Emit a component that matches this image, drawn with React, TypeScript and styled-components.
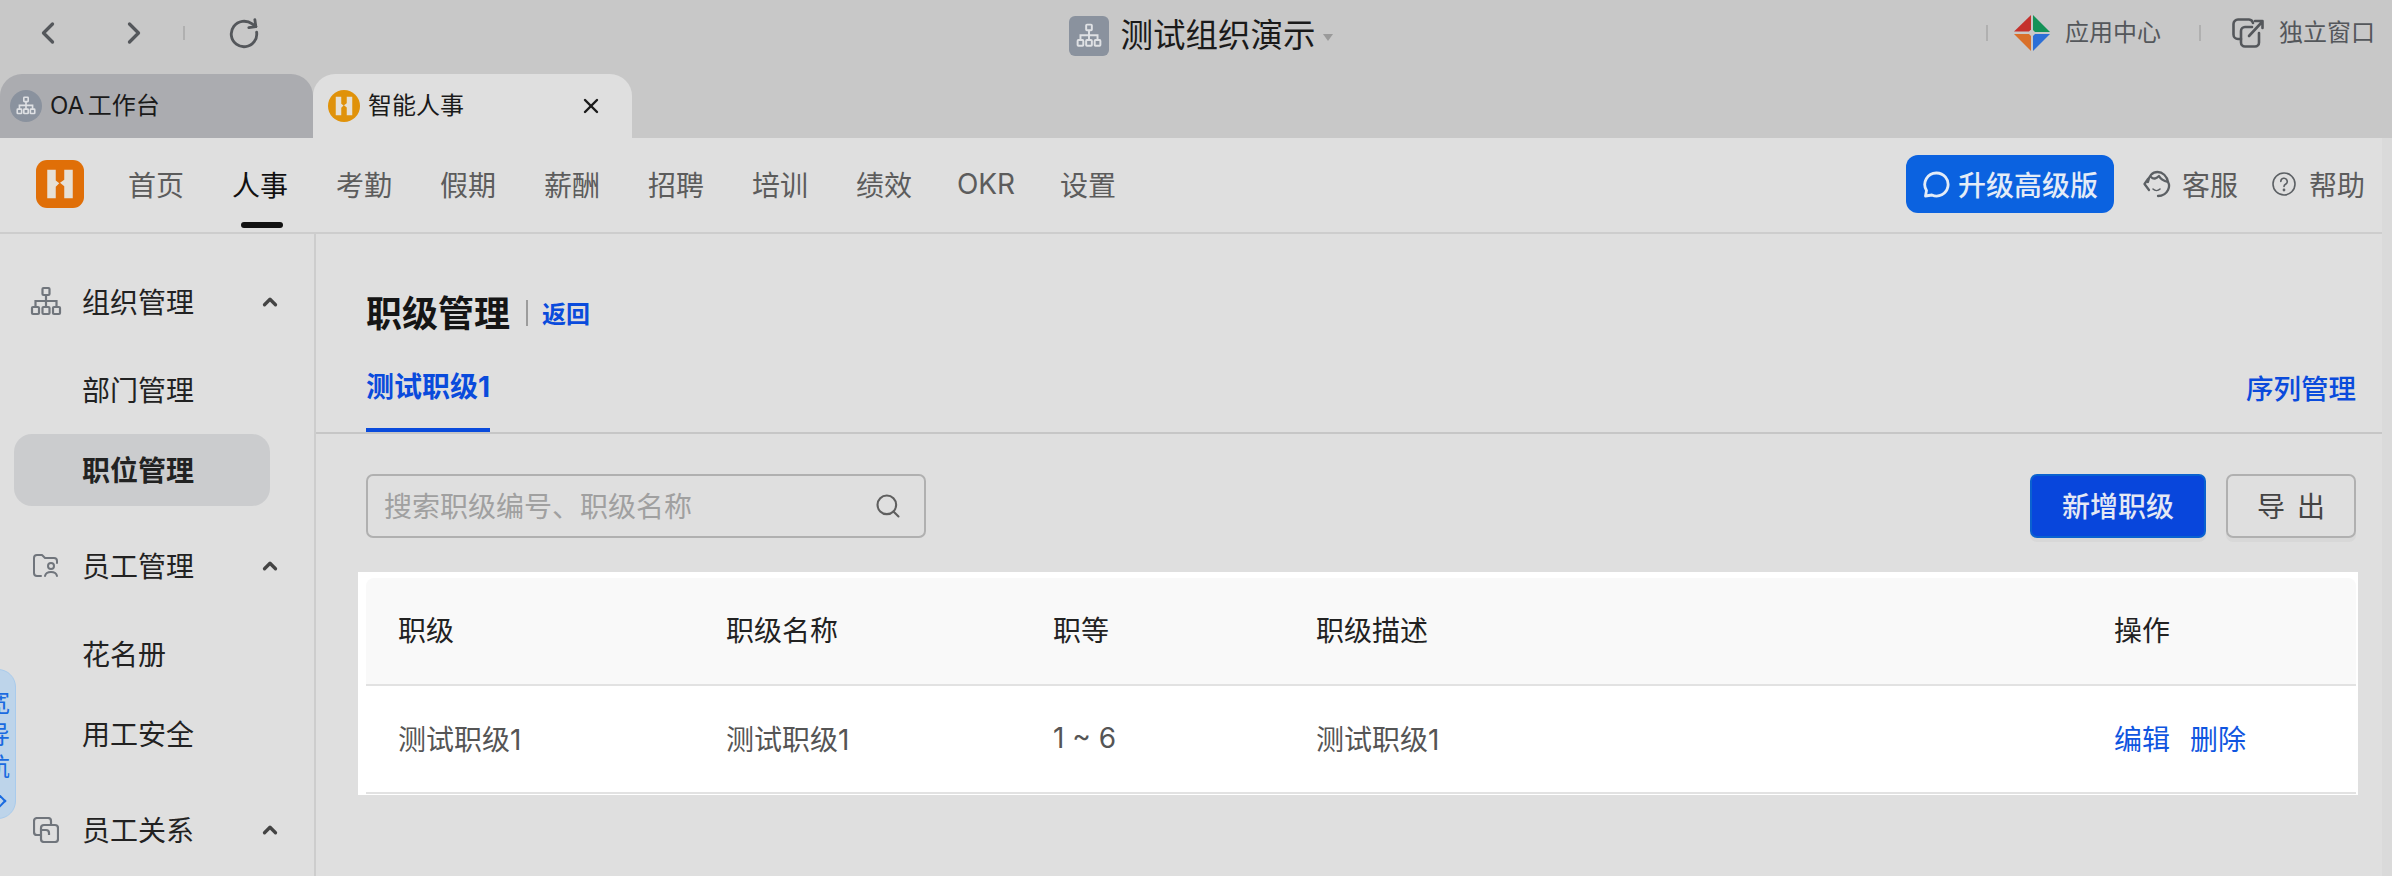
import React from 'react';
import styled, { createGlobalStyle } from 'styled-components';
import { ChevronLeft, ChevronRight, RotateCw, Search, X, ChevronUp } from 'lucide-react';

const NAV_ITEMS = ['首页', '人事', '考勤', '假期', '薪酬', '招聘', '培训', '绩效', 'OKR', '设置'];

const SIDE_GROUPS = [
  { title: '组织管理', icon: 'org', items: ['部门管理', '职位管理'] },
  { title: '员工管理', icon: 'folder', items: ['花名册', '用工安全'] },
  { title: '员工关系', icon: 'link', items: [] as string[] },
];

const COLUMNS = '328px 327px 263px 798px 1fr';

const OrgIcon = ({ size = 32, color = 'currentColor', strokeWidth = 2.4 }: { size?: number; color?: string; strokeWidth?: number }) => (
  <svg width={size} height={size} viewBox="0 0 32 32" fill="none" stroke={color} strokeWidth={strokeWidth}>
    <rect x="12.5" y="2" width="7" height="7" rx="1" />
    <path d="M16 9v6M5.5 21v-6h21v6M16 15v6" />
    <rect x="2" y="21" width="7" height="7" rx="1" />
    <rect x="12.5" y="21" width="7" height="7" rx="1" />
    <rect x="23" y="21" width="7" height="7" rx="1" />
  </svg>
);

const FolderIcon = () => (
  <svg width="26" height="24" viewBox="0 0 26 24" fill="none" stroke="#70757c" strokeWidth="2" strokeLinecap="round" strokeLinejoin="round">
    <path d="M8 22H4a3 3 0 0 1-3-3V4a3 3 0 0 1 3-3h5l3 3h9a3 3 0 0 1 3 3v2" />
    <circle cx="18" cy="12" r="3" />
    <path d="M12 22c.6-3 3-4 6-4s5.400 1 6 4" />
  </svg>
);

const LinkIcon = () => (
  <svg width="26" height="26" viewBox="0 0 26 26" fill="none" stroke="#70757c" strokeWidth="2.2" strokeLinejoin="round">
    <path d="M7 18H4a3 3 0 0 1-3-3V4a3 3 0 0 1 3-3h11a3 3 0 0 1 3 3v3" />
    <rect x="8" y="8" width="17" height="17" rx="3" />
    <path d="M8 13h5a3 3 0 0 1 3 3v2" />
  </svg>
);

const BrandMark = ({ size }: { size: number }) => (
  <svg width={size} height={size} viewBox="0 0 24 24" fill="#e6e0d6">
    <path d="M3 2h6v7.500l2.500 2-2.500 2.500v8H3z" />
    <path d="M21 2h-6v7l-3 2.200 3 2.300v8.500h6z" />
  </svg>
);

const DiamondLogo = () => (
  <svg width="36" height="36" viewBox="0 0 36 36">
    <path d="M17 0v14.500l-2 2H0z" fill="#c5312c" />
    <path d="M19 0l17 17H21l-2-2z" fill="#149257" />
    <path d="M36 19L19 36V21l2-2z" fill="#2c6fd6" />
    <path d="M0 19h15l2 2v15z" fill="#d9702a" />
  </svg>
);

const PopoutIcon = () => (
  <svg width="32" height="30" viewBox="0 0 32 30" fill="none" stroke="#54575b" strokeWidth="2.6" strokeLinecap="round" strokeLinejoin="round">
    <path d="M9 21H6a4.500 4.500 0 0 1-4.500-4.500V6A4.500 4.500 0 0 1 6 1.500h11A4.500 4.500 0 0 1 21 5" />
    <path d="M27 15v9.500a4 4 0 0 1-4 4H13a4 4 0 0 1-4-4V13a4 4 0 0 1 4-4h7" />
    <path d="M17 18L30 4M23 3h7.500v7" />
  </svg>
);

const ChatIcon = () => (
  <svg width="27" height="27" viewBox="0 0 27 27" fill="none" stroke="#e4ecf7" strokeWidth="2.800" strokeLinejoin="round">
    <path d="M13.500 2a11.500 11.500 0 1 1-4.600 22L2.500 25l1-5.500A11.500 11.500 0 0 1 13.500 2z" />
  </svg>
);

const ServiceIcon = () => (
  <svg width="28" height="28" viewBox="0 0 28 28" fill="none" stroke="#5c6064" strokeWidth="2.300" strokeLinecap="round" strokeLinejoin="round">
    <path d="M5 12C5.500 6 9.500 2 14.500 2S24 6 25 12" />
    <path d="M8 7c3 3 6 1 8-1 1.500 3 5 5 9 6" />
    <path d="M5 9L1.500 14 6 20" />
    <path d="M25 12c1.500 2.500 1.500 5 0 8-2 4-6 6-10 6" />
    <path d="M10 19c2 2 5 2 7 0" strokeWidth="1.600" />
  </svg>
);

const HelpIcon = () => (
  <svg width="24" height="24" viewBox="0 0 24 24" fill="none" stroke="#5c6064" strokeWidth="1.600" strokeLinecap="round">
    <circle cx="12" cy="12" r="11" />
    <path d="M8.800 9.500A3.200 3.200 0 1 1 13.500 12.300c-1 .6-1.500 1.100-1.500 2.200" />
    <circle cx="12" cy="18" r="0.600" fill="#5c6064" />
  </svg>
);

const App: React.FC = () => {
  return (
    <Page>
      <GlobalStyle />
      <TitleBar>
        <TitleLeft>
          <IconSlot><ChevronLeft size={36} strokeWidth={2.2} /></IconSlot>
          <ForwardSlot><ChevronRight size={36} strokeWidth={2.2} /></ForwardSlot>
          <ThinRule />
          <RefreshSlot><RotateCw size={34} strokeWidth={2} /></RefreshSlot>
        </TitleLeft>
        <OrgSwitch>
          <OrgBadge><OrgIcon size={26} color="#dfe1e4" strokeWidth={2.4} /></OrgBadge>
          <OrgName>测试组织演示</OrgName>
          <Caret />
        </OrgSwitch>
        <TitleRight>
          <ThinRule />
          <DiamondLogo />
          <TitleLink>应用中心</TitleLink>
          <ThinRule />
          <PopoutIcon />
          <TitleLink>独立窗口</TitleLink>
        </TitleRight>
      </TitleBar>

      <TabStrip>
        <WindowTab>
          <TabCircle $color="#8a929e"><OrgIcon size={20} color="#dfe1e4" strokeWidth={2.6} /></TabCircle>
          <TabLabel>OA 工作台</TabLabel>
        </WindowTab>
        <WindowTab $active>
          <TabCircle $color="#e0920a"><BrandMark size={22} /></TabCircle>
          <TabLabel>智能人事</TabLabel>
          <TabClose><X size={24} strokeWidth={2.4} /></TabClose>
        </WindowTab>
      </TabStrip>

      <AppArea>
        <AppBody>
          <TopNav>
            <LogoBox><BrandMark size={34} /></LogoBox>
            <NavList>
              {NAV_ITEMS.map((item) => (
                <NavItem key={item} $active={item === '人事'}>{item}</NavItem>
              ))}
            </NavList>
            <UpgradeButton><ChatIcon />升级高级版</UpgradeButton>
            <NavAction><ServiceIcon />客服</NavAction>
            <HelpAction><HelpIcon />帮助</HelpAction>
          </TopNav>

          <Columns>
            <Sidebar>
              {SIDE_GROUPS.map((group) => (
                <SideGroup key={group.title}>
                  <GroupHead>
                    <GroupIcon>
                      {group.icon === 'org' && <OrgIcon size={32} color="#70757c" strokeWidth={2.200} />}
                      {group.icon === 'folder' && <FolderIcon />}
                      {group.icon === 'link' && <LinkIcon />}
                    </GroupIcon>
                    <GroupTitle>{group.title}</GroupTitle>
                    <GroupArrow><ChevronUp size={22} strokeWidth={3.6} /></GroupArrow>
                  </GroupHead>
                  {group.items.length > 0 && (
                    <SubList>
                      {group.items.map((item) => (
                        <SubItem key={item} $active={item === '职位管理'}>{item}</SubItem>
                      ))}
                    </SubList>
                  )}
                </SideGroup>
              ))}
            </Sidebar>

            <Main>
              <TitleRow>
                <PageTitle>职级管理</PageTitle>
                <TitleDivider />
                <BackLink>返回</BackLink>
              </TitleRow>
              <TabsBar>
                <ActiveTab>测试职级1</ActiveTab>
                <SequenceLink>序列管理</SequenceLink>
              </TabsBar>
              <Toolbar>
                <SearchBox>
                  <SearchText>搜索职级编号、职级名称</SearchText>
                  <Search size={28} strokeWidth={1.8} color="#5f5f5f" />
                </SearchBox>
                <ToolButtons>
                  <PrimaryButton>新增职级</PrimaryButton>
                  <GhostButton>导 出</GhostButton>
                </ToolButtons>
              </Toolbar>
              <TableCard>
                <HeadRow>
                  <span>职级</span>
                  <span>职级名称</span>
                  <span>职等</span>
                  <span>职级描述</span>
                  <span>操作</span>
                </HeadRow>
                <BodyRow>
                  <span>测试职级1</span>
                  <span>测试职级1</span>
                  <span>1 ~ 6</span>
                  <span>测试职级1</span>
                  <Actions>
                    <ActionLink>编辑</ActionLink>
                    <ActionLink>删除</ActionLink>
                  </Actions>
                </BodyRow>
              </TableCard>
            </Main>
          </Columns>
        </AppBody>
        <ScrollStrip />
        <WideNavTab>
          <span>宽</span>
          <span>导</span>
          <span>航</span>
          <WideNavArrow />
        </WideNavTab>
      </AppArea>
    </Page>
  );
};

export default App;

const GlobalStyle = createGlobalStyle`
  html, body {
    margin: 0;
    padding: 0;
    background: #dfdfdf;
    overflow: hidden;
  }
  * {
    box-sizing: border-box;
  }
  body {
    font-family: 'Inter', 'Noto Sans CJK SC', sans-serif;
  }
`;

const Page = styled.div`
  width: 2392px;
  height: 876px;
  display: flex;
  flex-direction: column;
  overflow: hidden;
  background: #c8c8c8;
`;

const TitleBar = styled.div`
  height: 74px;
  flex: none;
  display: grid;
  grid-template-columns: 1fr auto 1fr;
  align-items: center;
  padding: 0 17px 8px 40px;
`;

const TitleLeft = styled.div`
  display: flex;
  align-items: center;
  color: #54575b;
`;

const IconSlot = styled.div`
  width: 16px;
  height: 36px;
  display: flex;
  align-items: center;
  justify-content: center;

  & > svg {
    flex: none;
  }
`;

const ForwardSlot = styled(IconSlot)`
  margin-left: 70px;
  margin-right: 41px;
`;

const RefreshSlot = styled.div`
  margin-left: 42px;
  margin-top: 2px;
  height: 34px;
  display: flex;
  transform: rotate(-8deg);
`;

const ThinRule = styled.div`
  width: 2px;
  height: 14px;
  background: #b0b0b0;
`;

const OrgSwitch = styled.div`
  display: flex;
  align-items: center;
  margin: 5px 13px 0 0;
`;

const OrgBadge = styled.div`
  width: 40px;
  height: 40px;
  border-radius: 6px;
  background: #8a929e;
  display: flex;
  align-items: center;
  justify-content: center;
`;

const OrgName = styled.div`
  margin-left: 11px;
  font-size: 32.5px;
  line-height: 40px;
  color: #1a1a1a;
`;

const Caret = styled.div`
  margin-left: 7px;
  margin-top: 3px;
  width: 0;
  height: 0;
  border-left: 5px solid transparent;
  border-right: 5px solid transparent;
  border-top: 7px solid #9a9a9a;
`;

const TitleRight = styled.div`
  display: flex;
  align-items: center;
  justify-content: flex-end;

  & > ${ThinRule} {
    height: 16px;
    margin-right: 26px;
  }
  & > ${ThinRule}:nth-of-type(n + 2) {
    margin-left: 38px;
    margin-right: 31px;
  }
`;

const TitleLink = styled.div`
  margin-left: 15px;
  font-size: 24px;
  line-height: 32px;
  color: #54575b;
`;

const TabStrip = styled.div`
  height: 64px;
  flex: none;
  display: flex;
`;

const WindowTab = styled.div<{ $active?: boolean }>`
  position: relative;
  width: ${({ $active }) => ($active ? 319 : 313)}px;
  padding-left: ${({ $active }) => ($active ? 15 : 10)}px;
  display: flex;
  align-items: center;
  border-radius: 22px 22px 0 0;
  background: ${({ $active }) => ($active ? '#dfdfdf' : '#abacb0')};
  padding-bottom: 0;
`;

const TabCircle = styled.div<{ $color: string }>`
  width: 32px;
  height: 32px;
  border-radius: 50%;
  background: ${({ $color }) => $color};
  display: flex;
  align-items: center;
  justify-content: center;
  overflow: hidden;
`;

const TabLabel = styled.div`
  margin-left: 8px;
  font-size: 24px;
  line-height: 32px;
  color: #1a1a1a;
  word-spacing: -3px;
`;

const TabClose = styled.div`
  margin-left: auto;
  margin-right: 29px;
  display: flex;
  color: #1a1a1a;
`;

const AppArea = styled.div`
  position: relative;
  flex: 1;
  min-height: 0;
  display: flex;
  background: #dfdfdf;
`;

const AppBody = styled.div`
  flex: 1;
  min-width: 0;
  display: flex;
  flex-direction: column;
`;

const ScrollStrip = styled.div`
  width: 10px;
  flex: none;
  background: #dadada;
`;

const TopNav = styled.div`
  height: 96px;
  flex: none;
  display: flex;
  align-items: center;
  padding: 0 17px 2px 36px;
  border-bottom: 2px solid #cdcdcd;
`;

const LogoBox = styled.div`
  width: 48px;
  height: 48px;
  border-radius: 11px;
  background: #e06f08;
  display: flex;
  align-items: center;
  justify-content: center;
`;

const NavList = styled.div`
  flex: 1;
  margin-left: 44px;
  display: flex;
  gap: 48px;
  height: 100%;
`;

const NavItem = styled.div<{ $active?: boolean }>`
  position: relative;
  width: 56px;
  display: flex;
  align-items: center;
  justify-content: center;
  white-space: nowrap;
  font-size: 28px;
  color: ${({ $active }) => ($active ? '#111' : '#5c5c5c')};

  &:nth-child(9) {
    width: 52px;
  }

  &::after {
    content: '';
    display: ${({ $active }) => ($active ? 'block' : 'none')};
    position: absolute;
    left: 9px;
    right: 5px;
    bottom: 2px;
    height: 6px;
    border-radius: 3px;
    background: #111;
  }
`;

const UpgradeButton = styled.div`
  width: 208px;
  height: 58px;
  border-radius: 12px;
  background: #0b62e0;
  color: #e4ecf7;
  font-size: 28px;
  font-weight: 500;
  display: flex;
  align-items: center;
  padding-left: 17px;
  gap: 8px;
`;

const NavAction = styled.div`
  margin-left: 29px;
  display: flex;
  align-items: center;
  gap: 11px;
  font-size: 28px;
  color: #5c5c5c;
`;

const HelpAction = styled(NavAction)`
  margin-left: 34px;
  gap: 13px;
`;

const Columns = styled.div`
  flex: 1;
  min-height: 0;
  display: flex;
`;

const Sidebar = styled.div`
  width: 316px;
  flex: none;
  padding: 32px 44px 0 14px;
  border-right: 2px solid #cdcdcd;
  overflow: hidden;
`;

const SideGroup = styled.div`
  margin-bottom: 24px;
`;

const GroupHead = styled.div`
  height: 72px;
  display: flex;
  align-items: center;
  padding-left: 16px;
  color: #222;
`;

const GroupIcon = styled.div`
  width: 32px;
  height: 32px;
  display: flex;
  align-items: center;
  justify-content: center;
`;

const GroupTitle = styled.div`
  margin: -2px 0 0 20px;
  font-size: 28px;
  color: #222;
`;

const GroupArrow = styled.div`
  margin-left: auto;
  margin-right: -11px;
  display: flex;
  color: #444;
`;

const SubList = styled.div`
  margin-top: 16px;
  display: flex;
  flex-direction: column;
  gap: 8px;
`;

const SubItem = styled.div<{ $active?: boolean }>`
  height: 72px;
  border-radius: 18px;
  padding: 0 0 2px 68px;
  display: flex;
  align-items: center;
  font-size: 28px;
  color: #222;
  font-weight: ${({ $active }) => ($active ? 600 : 400)};
  background: ${({ $active }) => ($active ? '#cbccce' : 'transparent')};
`;

const WideNavTab = styled.div`
  position: absolute;
  left: -24px;
  top: 531px;
  width: 40px;
  height: 150px;
  border: 1px solid #a9cbec;
  border-radius: 0 18px 18px 0;
  background: #bdd4ea;
  color: #1a6be0;
  font-size: 25px;
  line-height: 32px;
  display: flex;
  flex-direction: column;
  align-items: flex-end;
  padding: 17px 5px 0 0;
`;

const WideNavArrow = styled.i`
  margin: 12px 6px 0 0;
  width: 12px;
  height: 12px;
  border-top: 2.500px solid #1a6be0;
  border-right: 2.500px solid #1a6be0;
  transform: rotate(45deg);
`;

const Main = styled.div`
  flex: 1;
  min-width: 0;
`;

const TitleRow = styled.div`
  height: 78px;
  margin-top: 38px;
  padding-left: 50px;
  display: flex;
  align-items: center;
`;

const PageTitle = styled.div`
  font-size: 36px;
  font-weight: 700;
  color: #151515;
`;

const TitleDivider = styled.div`
  width: 2px;
  height: 26px;
  margin: 4px 14px 0 16px;
  background: #9c9c9c;
`;

const BackLink = styled.div`
  margin-top: 3px;
  font-size: 24px;
  font-weight: 600;
  color: #0a4bdc;
`;

const TabsBar = styled.div`
  height: 84px;
  padding: 0 26px 0 50px;
  display: flex;
  justify-content: space-between;
  border-bottom: 2px solid #c6c6c6;
`;

const ActiveTab = styled.div`
  height: 82px;
  padding-top: 17px;
  font-size: 28px;
  line-height: 40px;
  font-weight: 700;
  color: #0a4bdc;
  border-bottom: 4px solid #0a4bdc;
`;

const SequenceLink = styled.div`
  padding-top: 19px;
  font-size: 27.500px;
  line-height: 40px;
  font-weight: 500;
  color: #0a4bdc;
`;

const Toolbar = styled.div`
  margin-top: 40px;
  padding: 0 26px 0 50px;
  display: flex;
  justify-content: space-between;
`;

const SearchBox = styled.div`
  width: 560px;
  height: 64px;
  border: 2px solid #b0b0b0;
  border-radius: 7px;
  padding: 0 22px 0 17px;
  display: flex;
  align-items: center;
  justify-content: space-between;
`;

const SearchText = styled.div`
  margin: -2px 0 0 -1px;
  font-size: 28px;
  color: #a0a0a0;
`;

const ToolButtons = styled.div`
  display: flex;
  gap: 20px;
`;

const PrimaryButton = styled.div`
  width: 176px;
  height: 64px;
  padding-bottom: 2px;
  border-radius: 7px;
  border: 2px solid #0a62d0;
  background: #0846dc;
  color: #e4e8f4;
  font-size: 28px;
  font-weight: 500;
  display: flex;
  align-items: center;
  justify-content: center;
  box-shadow: 0 4px 0 rgba(0, 0, 0, 0.03);
`;

const GhostButton = styled.div`
  width: 130px;
  height: 64px;
  padding-bottom: 2px;
  border-radius: 7px;
  border: 2px solid #b0b0b0;
  color: #444;
  font-size: 28px;
  display: flex;
  align-items: center;
  justify-content: center;
  word-spacing: 4px;
  box-shadow: 0 4px 0 rgba(0, 0, 0, 0.03);
`;

const TableCard = styled.div`
  width: 2000px;
  height: 223px;
  margin: 34px 0 0 42px;
  padding: 6px 2px 0 8px;
  background: #fff;
`;

const HeadRow = styled.div`
  height: 108px;
  display: grid;
  grid-template-columns: ${COLUMNS};
  align-items: center;
  font-size: 28px;
  color: #222;
  background: #f9f9f9;
  border-radius: 8px 8px 0 0;
  border-bottom: 2px solid #e2e2e2;

  & > span {
    padding-left: 32px;
    margin-top: -4px;
  }
`;

const BodyRow = styled(HeadRow)`
  color: #555;
  background: #fff;
  border-radius: 0;

  & > span {
    margin-top: -2px;
  }
`;

const Actions = styled.span`
  display: flex;
  gap: 20px;
`;

const ActionLink = styled.span`
  color: #0f55e0;
`;
